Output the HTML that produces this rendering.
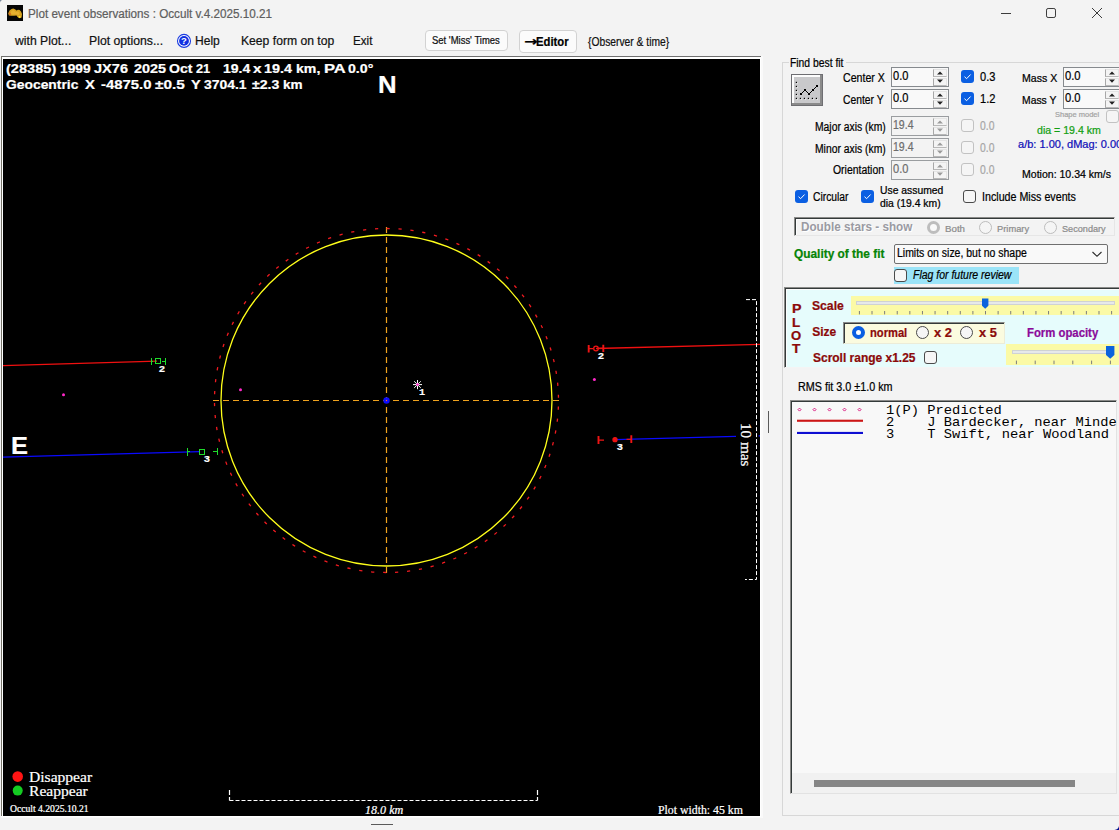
<!DOCTYPE html>
<html><head><meta charset="utf-8"><title>Plot event observations</title>
<style>
html,body{margin:0;padding:0}
body{width:1119px;height:830px;overflow:hidden;position:relative;background:#f3f3f3;font-family:"Liberation Sans",sans-serif;font-size:11px}
.a{position:absolute}
.t{position:absolute;white-space:pre;line-height:1;transform-origin:0 0;-webkit-text-stroke:0.22px}
.btn{position:absolute;background:#fbfbfb;border:1px solid #d2d2d2;border-radius:4px;box-sizing:border-box}
.num{position:absolute;box-sizing:border-box;border:1px solid #868a8e;background:#f9f9f9;width:58px;height:20px}
.num.d{background:#f3f3f3;border-color:#9a9da0}
.sp{position:absolute;box-sizing:border-box;width:14px;height:8px;border:1px solid #e4e4e4;border-left-color:#a8a8a8;border-bottom-color:#b8b8b8;background:#f4f4f4}
.cb{position:absolute;box-sizing:border-box;width:13px;height:13px;border-radius:3px}
.cb.on{background:#0b5fe2}
.cb.off{border:1px solid #4a4a4a;background:#f6f6f6}
.cb.dis{border:1px solid #c2c2c2;background:#f5f5f5}
.rd{position:absolute;box-sizing:border-box;width:13px;height:13px;border-radius:50%}
.rd.off{border:1px solid #4a4a4a;background:#f6f6f6}
.rd.dis{border:1px solid #bdbdbd;background:#f5f5f5}
</style></head><body>
<!-- title bar -->
<svg class="a" style="left:7px;top:5px" width="16" height="16" viewBox="0 0 16 16"><rect width="16" height="16" fill="#050505"/><path d="M1.2 8.5 L2.5 5.5 L4.5 4 L6.3 3.4 L8 4.2 L9.5 5.6 L11 4.8 L12.6 5 L14 6.5 L15 9 L14.6 12.5 L12.5 13.2 L10.5 12 L9.5 10.5 L7 10.8 L4 10.7 L2 10.5 Z" fill="#d6a21e"/><path d="M3 8 L5 5.5 L7 5 L8.5 7 L11 6.5 L12.5 8 L12 10 L9 9.5 L5 9.6 Z" fill="#e6b030"/><circle cx="12.6" cy="12" r="1.1" fill="#ffe23a"/><path d="M1.8 9.5 L3 7 L4 9.8 Z" fill="#d8551c"/></svg>
<svg class="a" style="left:995px;top:0" width="124" height="28" viewBox="995 0 124 28" fill="none" stroke="#3c3c3c" stroke-width="1"><path d="M1001 13.5 H1011"/><rect x="1046.5" y="8.5" width="9" height="9" rx="1.6"/><path d="M1092 8 L1102 18 M1102 8 L1092 18"/></svg>
<!-- menu -->
<svg class="a" style="left:176px;top:33px" width="16" height="16" viewBox="0 0 16 16"><circle cx="8" cy="7.9" r="6.5" fill="#fff" stroke="#1a3be0" stroke-width="1.1"/><circle cx="8" cy="7.9" r="4.9" fill="#1030e2"/><text x="8" y="11.3" font-family="Liberation Sans, sans-serif" font-weight="700" font-size="9.5" fill="#fff" text-anchor="middle">?</text></svg>
<div class="btn" style="left:425px;top:30px;width:83px;height:21px"></div>
<div class="btn" style="left:518.5px;top:30px;width:58px;height:23px"></div>
<!-- plot frame -->
<div class="a" style="left:1px;top:56px;width:762px;height:762px;background:#fafafa"></div><div class="a" style="left:1px;top:56px;width:760px;height:761px;background:#fff"></div>
<div class="a" style="left:1px;top:56px;width:760px;height:1px;background:#6f6f6f"></div>
<div class="a" style="left:1px;top:56px;width:1px;height:760px;background:#77756a"></div>
<div class="a" style="left:3px;top:59px;width:757px;height:757px;background:#000"></div>
<svg class="a" style="left:0;top:0" width="1119" height="830" viewBox="0 0 1119 830" fill="none">
<g stroke="#f0a31e" stroke-width="1.2" stroke-dasharray="6 4">
<path d="M386.5 227 V574"/><path d="M213 400.5 H559"/></g>
<circle cx="386.5" cy="400.5" r="165.5" stroke="#ffff1a" stroke-width="1.3"/>
<circle cx="386.5" cy="400.5" r="172" stroke="#f01a20" stroke-width="1.3" stroke-dasharray="3.2 8.808" transform="rotate(-90 386.5 400.5)"/>
<circle cx="386.5" cy="400.5" r="3.2" fill="#0b0bff"/><rect x="385.9" y="399.9" width="1.2" height="1.2" fill="#ff6a30"/>
<!-- chords -->
<path d="M3 365.6 L157 361.2 M596 348.5 L760 344.3" stroke="#f01010" stroke-width="1.35"/>
<path d="M3 457.2 L200 451.6 M615 439.7 L736 436.4 M758.6 435.8 L760 435.8" stroke="#0a0aff" stroke-width="1.35"/>
<!-- green markers (reappear) -->
<g stroke="#1fdc2c" stroke-width="1" shape-rendering="crispEdges">
<path d="M151 358 V365 M151 361.4 H153 M155 358.9 H160 V363.9 H155 Z M165.5 357.5 V364.5 M162 361 H165.5"/>
<path d="M187 448 V455.5 M187 451.9 H189.5 M199.5 449 H204.5 V454 H199.5 Z M217.8 447.5 V455 M213 451.1 H217.8"/>
</g>
<!-- red markers (disappear) -->
<g stroke="#ee1414" stroke-width="1.9">
<path d="M588.7 345 V352.5 M603.3 344.8 V352 M598.5 436 V444 M631.3 435.2 V443"/></g>
<g stroke="#ee1414" stroke-width="1.3">
<path d="M588.6 348.7 H593 M599 348.4 H603.3 M598.4 440.1 H604 M626.5 439.3 H631.3"/>
<circle cx="596" cy="348.5" r="2.3"/>
<circle cx="615" cy="439.7" r="2" fill="#ee1414"/>
</g>
<!-- predicted -->
<g fill="#ff28c8"><circle cx="63.5" cy="394.7" r="1.5"/><circle cx="240.5" cy="389.8" r="1.5"/><circle cx="594.4" cy="379.6" r="1.5"/></g>
<g stroke="#fff" stroke-width="1"><path d="M413 384.6 H422 M417.5 380 V389.2 M414.2 381.3 L420.8 387.9 M420.8 381.3 L414.2 387.9"/></g>
<circle cx="417.5" cy="384.6" r="1.3" fill="#ff28c8"/>
<!-- mas bracket -->
<g stroke="#fff" stroke-width="1" stroke-dasharray="4 2"><path d="M746 299.6 H756.5 V579.5 H745"/></g>
<!-- km bracket -->
<g stroke="#fff" stroke-width="1.2"><path d="M229.5 790 V800.5 M537.5 790 V800.5" stroke-dasharray="5 2"/><path d="M229.5 800.5 H537.5" stroke-dasharray="4 2"/></g>
<!-- legend -->
<circle cx="17.7" cy="776.6" r="5.3" fill="#ff1414"/><circle cx="17.7" cy="790.6" r="5" fill="#14cc22"/>
</svg>
<div class="a" style="left:738px;top:420px;width:17px;height:50px;background:#000"></div>

<div class="a" style="left:782px;top:62px;width:400px;height:754px;border:1px solid #d7d7d7;box-sizing:border-box"></div>
<div class="a" style="left:789px;top:57px;width:57px;height:12px;background:#f3f3f3"></div>
<div class="a" style="left:791px;top:74px;width:32px;height:32px;background:#6e6e72"></div>
<div class="a" style="left:792px;top:75px;width:30px;height:30px;background:#8a8a8a"></div>
<div class="a" style="left:792px;top:75px;width:28px;height:28px;background:#fdfdfd"></div>
<div class="a" style="left:794px;top:77px;width:26px;height:26px;background:#c9c9cb"></div>
<svg class="a" style="left:791px;top:74px" width="32" height="32" viewBox="791 74 32 32"><g fill="#fff"><rect x="796.2" y="82.2" width="1.5" height="1.5"/><rect x="796.2" y="86.2" width="1.5" height="1.5"/><rect x="796.2" y="90.2" width="1.5" height="1.5"/><rect x="796.2" y="94.2" width="1.5" height="1.5"/><rect x="796.2" y="98.2" width="1.5" height="1.5"/><rect x="800.2" y="98.2" width="1.5" height="1.5"/><rect x="804.2" y="98.2" width="1.5" height="1.5"/><rect x="808.2" y="98.2" width="1.5" height="1.5"/><rect x="812.2" y="98.2" width="1.5" height="1.5"/><rect x="816.2" y="98.2" width="1.5" height="1.5"/></g><g fill="#000"><rect x="795.8" y="81.8" width="1.3" height="1.3"/><rect x="795.8" y="85.8" width="1.3" height="1.3"/><rect x="795.8" y="89.8" width="1.3" height="1.3"/><rect x="795.8" y="93.8" width="1.3" height="1.3"/><rect x="795.8" y="97.8" width="1.3" height="1.3"/><rect x="799.8" y="97.8" width="1.3" height="1.3"/><rect x="803.8" y="97.8" width="1.3" height="1.3"/><rect x="807.8" y="97.8" width="1.3" height="1.3"/><rect x="811.8" y="97.8" width="1.3" height="1.3"/><rect x="815.8" y="97.8" width="1.3" height="1.3"/></g><path d="M801 94 L805 90 L809 94 L813 90 L817 86" stroke="#000" stroke-width="1" fill="none"/><g fill="#000"><rect x="800" y="93" width="2" height="2"/><rect x="804" y="89" width="2" height="2"/><rect x="808" y="93" width="2" height="2"/><rect x="812" y="89" width="2" height="2"/><rect x="816" y="85" width="2" height="2"/></g></svg>
<div class="num" style="left:891px;top:67px"><div class="sp" style="left:41px;top:1px"></div><div class="sp" style="left:41px;top:9.5px"></div><svg class="a" style="left:41px;top:1px" width="14" height="17" viewBox="0 0 14 17"><path d="M4 5.6 L7 2.4 L10 5.6 Z M4 10.6 L7 13.8 L10 10.6 Z" fill="#222"/></svg></div>
<div class="num" style="left:891px;top:89px"><div class="sp" style="left:41px;top:1px"></div><div class="sp" style="left:41px;top:9.5px"></div><svg class="a" style="left:41px;top:1px" width="14" height="17" viewBox="0 0 14 17"><path d="M4 5.6 L7 2.4 L10 5.6 Z M4 10.6 L7 13.8 L10 10.6 Z" fill="#222"/></svg></div>
<div class="num d" style="left:891px;top:116px"><div class="sp" style="left:41px;top:1px"></div><div class="sp" style="left:41px;top:9.5px"></div><svg class="a" style="left:41px;top:1px" width="14" height="17" viewBox="0 0 14 17"><path d="M4 5.6 L7 2.4 L10 5.6 Z M4 10.6 L7 13.8 L10 10.6 Z" fill="#9a9a9a"/></svg></div>
<div class="num d" style="left:891px;top:138px"><div class="sp" style="left:41px;top:1px"></div><div class="sp" style="left:41px;top:9.5px"></div><svg class="a" style="left:41px;top:1px" width="14" height="17" viewBox="0 0 14 17"><path d="M4 5.6 L7 2.4 L10 5.6 Z M4 10.6 L7 13.8 L10 10.6 Z" fill="#9a9a9a"/></svg></div>
<div class="num d" style="left:891px;top:160px"><div class="sp" style="left:41px;top:1px"></div><div class="sp" style="left:41px;top:9.5px"></div><svg class="a" style="left:41px;top:1px" width="14" height="17" viewBox="0 0 14 17"><path d="M4 5.6 L7 2.4 L10 5.6 Z M4 10.6 L7 13.8 L10 10.6 Z" fill="#9a9a9a"/></svg></div>
<div class="num" style="left:1063px;top:67px"><div class="sp" style="left:41px;top:1px"></div><div class="sp" style="left:41px;top:9.5px"></div><svg class="a" style="left:41px;top:1px" width="14" height="17" viewBox="0 0 14 17"><path d="M4 5.6 L7 2.4 L10 5.6 Z M4 10.6 L7 13.8 L10 10.6 Z" fill="#222"/></svg></div>
<div class="num" style="left:1063px;top:89px"><div class="sp" style="left:41px;top:1px"></div><div class="sp" style="left:41px;top:9.5px"></div><svg class="a" style="left:41px;top:1px" width="14" height="17" viewBox="0 0 14 17"><path d="M4 5.6 L7 2.4 L10 5.6 Z M4 10.6 L7 13.8 L10 10.6 Z" fill="#222"/></svg></div>
<div class="cb on" style="left:961px;top:70px"><svg class="a" style="left:0;top:0" width="13" height="13" viewBox="0 0 13 13"><path d="M3.5 6.7 L5.6 8.7 L9.6 4.5" stroke="#fff" stroke-width="1" fill="none"/></svg></div>
<div class="cb on" style="left:961px;top:92px"><svg class="a" style="left:0;top:0" width="13" height="13" viewBox="0 0 13 13"><path d="M3.5 6.7 L5.6 8.7 L9.6 4.5" stroke="#fff" stroke-width="1" fill="none"/></svg></div>
<div class="cb dis" style="left:961px;top:119px"></div>
<div class="cb dis" style="left:961px;top:141px"></div>
<div class="cb dis" style="left:961px;top:163px"></div>
<div class="cb dis" style="left:1106px;top:109.5px"></div>
<div class="cb on" style="left:795px;top:190px"><svg class="a" style="left:0;top:0" width="13" height="13" viewBox="0 0 13 13"><path d="M3.5 6.7 L5.6 8.7 L9.6 4.5" stroke="#fff" stroke-width="1" fill="none"/></svg></div>
<div class="cb on" style="left:861px;top:190px"><svg class="a" style="left:0;top:0" width="13" height="13" viewBox="0 0 13 13"><path d="M3.5 6.7 L5.6 8.7 L9.6 4.5" stroke="#fff" stroke-width="1" fill="none"/></svg></div>
<div class="cb off" style="left:963px;top:190px"></div>
<div class="a" style="left:794px;top:217px;width:321px;height:19px;box-sizing:border-box;border-top:1px solid #8a8a88;border-left:1px solid #8a8a88;border-right:1px solid #e6e6e6;border-bottom:1px solid #e6e6e6;box-shadow:inset 1px 1px 0 #343a3a,inset 2px 2px 0 #fcfcfc"></div>
<div class="rd" style="left:927px;top:221px;border:3.5px solid #bdbdbd;background:#fafafa"></div>
<div class="rd dis" style="left:979px;top:221px"></div><div class="rd dis" style="left:1044px;top:221px"></div>
<div class="a" style="left:894px;top:244px;width:214px;height:20px;box-sizing:border-box;border:1px solid #6f6f6f;border-radius:2px;background:#f9f9f9"></div>
<svg class="a" style="left:1090px;top:249px" width="14" height="10" viewBox="0 0 14 10"><path d="M2.5 3 L7 7.3 L11.5 3" stroke="#2a2a2a" stroke-width="1.1" fill="none"/></svg>
<div class="a" style="left:894px;top:267px;width:125px;height:17px;background:#9be4f8"></div>
<div class="cb off" style="left:894px;top:268.5px"></div>
<div class="a" style="left:784px;top:287px;width:340px;height:81px;box-sizing:border-box;background:#e6fcfc;border-top:1px solid #8a8a88;border-left:1px solid #8a8a88;border-bottom:1px solid #f4f4f4;box-shadow:inset 1px 1px 0 #343a3a,inset 2px 2px 0 #fcfcfc"></div>
<div class="a" style="left:851px;top:296px;width:268px;height:19px;background:#fbfaa6"></div>
<div class="a" style="left:856px;top:301px;width:259px;height:4px;box-sizing:border-box;background:#e6e9ea;border:1px solid #cfd2d4"></div>
<svg class="a" style="left:851px;top:296px" width="268" height="19" viewBox="851 296 268 19"><g fill="#7d7d7d"><rect x="858.90" y="311" width="1" height="3.4"/><rect x="871.51" y="311" width="1" height="3.4"/><rect x="884.12" y="311" width="1" height="3.4"/><rect x="896.73" y="311" width="1" height="3.4"/><rect x="909.34" y="311" width="1" height="3.4"/><rect x="921.95" y="311" width="1" height="3.4"/><rect x="934.56" y="311" width="1" height="3.4"/><rect x="947.17" y="311" width="1" height="3.4"/><rect x="959.78" y="311" width="1" height="3.4"/><rect x="972.39" y="311" width="1" height="3.4"/><rect x="985.00" y="311" width="1" height="3.4"/><rect x="997.61" y="311" width="1" height="3.4"/><rect x="1010.22" y="311" width="1" height="3.4"/><rect x="1022.83" y="311" width="1" height="3.4"/><rect x="1035.44" y="311" width="1" height="3.4"/><rect x="1048.05" y="311" width="1" height="3.4"/><rect x="1060.66" y="311" width="1" height="3.4"/><rect x="1073.27" y="311" width="1" height="3.4"/><rect x="1085.88" y="311" width="1" height="3.4"/><rect x="1098.49" y="311" width="1" height="3.4"/><rect x="1111.10" y="311" width="1" height="3.4"/></g><path d="M982 298.6 H988.4 V305.8 L985.2 308.8 L982 305.8 Z" fill="#0b63dd"/></svg>
<div class="a" style="left:843px;top:322px;width:162px;height:21.5px;box-sizing:border-box;background:#fbfbdf;border-top:1px solid #8a8a88;border-left:1px solid #8a8a88;border-right:1px solid #ececd8;border-bottom:1px solid #ececd8;box-shadow:inset 1px 1px 0 #343a3a"></div>
<div class="rd" style="left:852px;top:326px;border:4px solid #0b5fe2;background:#fff"></div>
<div class="rd off" style="left:916px;top:326px"></div><div class="rd off" style="left:960px;top:326px"></div>
<div class="cb off" style="left:924.3px;top:351px"></div>
<div class="a" style="left:1006px;top:344.3px;width:113px;height:20.4px;background:#fbfaa6"></div>
<div class="a" style="left:1012.4px;top:350px;width:102px;height:4px;box-sizing:border-box;background:#e6e9ea;border:1px solid #cfd2d4"></div>
<svg class="a" style="left:1006px;top:344px" width="113" height="22" viewBox="1006 344 113 22"><g fill="#7d7d7d"><rect x="1015.90" y="360.6" width="1" height="3.6"/><rect x="1034.70" y="360.6" width="1" height="3.6"/><rect x="1053.50" y="360.6" width="1" height="3.6"/><rect x="1072.30" y="360.6" width="1" height="3.6"/><rect x="1091.10" y="360.6" width="1" height="3.6"/><rect x="1109.90" y="360.6" width="1" height="3.6"/></g><path d="M1106 346 H1114.4 V355 L1110.2 358.8 L1106 355 Z" fill="#0b63dd"/></svg>
<div class="a" style="left:790px;top:400px;width:326.6px;height:394.4px;box-sizing:border-box;background:#f8f8f8;border-top:1px solid #8a8a88;border-left:1px solid #8a8a88;border-right:1px solid #e2e2e2;border-bottom:1px solid #e2e2e2;box-shadow:inset 1px 1px 0 #343a3a"></div>
<div class="a" style="left:792px;top:773px;width:323.6px;height:20.4px;background:#f1f1f1"></div>
<div class="a" style="left:814px;top:780px;width:261px;height:7px;background:#868686"></div>
<svg class="a" style="left:792px;top:402px" width="100" height="40" viewBox="792 402 100 40"><g fill="none" stroke="#d81a80" stroke-width="1"><path d="M799.5 408.1 l1.5 1.5 l-1.5 1.5 l-1.5 -1.5 Z"/><path d="M814.5 408.1 l1.5 1.5 l-1.5 1.5 l-1.5 -1.5 Z"/><path d="M829.5 408.1 l1.5 1.5 l-1.5 1.5 l-1.5 -1.5 Z"/><path d="M844.5 408.1 l1.5 1.5 l-1.5 1.5 l-1.5 -1.5 Z"/><path d="M859.5 408.1 l1.5 1.5 l-1.5 1.5 l-1.5 -1.5 Z"/></g><rect x="797" y="419.7" width="66" height="2.1" fill="#cc1616"/><rect x="797" y="431.9" width="66" height="2.1" fill="#0e0ed2"/></svg>
<div class="t" style="left:27.93px;top:8.00px;transform:scale(0.9735,1.0);font-family:'Liberation Sans', sans-serif;font-size:12px;font-weight:400;color:#5e5e5e;">Plot event observations : Occult v.4.2025.10.21</div>
<div class="t" style="left:14.50px;top:35.00px;transform:scale(0.9617,1.0);font-family:'Liberation Sans', sans-serif;font-size:12.7px;font-weight:400;color:#111;">with Plot...</div>
<div class="t" style="left:88.54px;top:35.00px;transform:scale(0.9645,1.0);font-family:'Liberation Sans', sans-serif;font-size:12.7px;font-weight:400;color:#111;">Plot options...</div>
<div class="t" style="left:195.05px;top:35.00px;transform:scale(0.9510,1.0);font-family:'Liberation Sans', sans-serif;font-size:12.7px;font-weight:400;color:#111;">Help</div>
<div class="t" style="left:240.54px;top:35.00px;transform:scale(0.9577,1.0);font-family:'Liberation Sans', sans-serif;font-size:12.7px;font-weight:400;color:#111;">Keep form on top</div>
<div class="t" style="left:352.58px;top:35.00px;transform:scale(0.9150,1.0);font-family:'Liberation Sans', sans-serif;font-size:12.7px;font-weight:400;color:#111;">Exit</div>
<div class="t" style="left:431.83px;top:36.00px;transform:scale(0.9470,1.0);font-family:'Liberation Sans', sans-serif;font-size:10px;font-weight:400;color:#111;">Set 'Miss' Times</div>
<div class="t" style="left:523.68px;top:35.00px;transform:scale(1.2211,1.0);font-family:'DejaVu Sans', sans-serif;font-size:13px;font-weight:700;color:#000;">→</div>
<div class="t" style="left:536.30px;top:36.00px;transform:scale(0.9393,1.0);font-family:'Liberation Sans', sans-serif;font-size:12px;font-weight:700;color:#000;">Editor</div>
<div class="t" style="left:587.59px;top:36.00px;transform:scale(0.8224,1.0);font-family:'Liberation Sans', sans-serif;font-size:12.5px;font-weight:400;color:#111;">{Observer &amp; time}</div>
<div class="t" style="left:6.10px;top:62.00px;transform:scale(1.0725,1.0);font-family:'Liberation Sans', sans-serif;font-size:13.6px;font-weight:700;color:#fff;">(28385)</div>
<div class="t" style="left:60.14px;top:62.00px;transform:scale(1.0103,1.0);font-family:'Liberation Sans', sans-serif;font-size:13.6px;font-weight:700;color:#fff;">1999</div>
<div class="t" style="left:94.23px;top:62.00px;transform:scale(1.0710,1.0);font-family:'Liberation Sans', sans-serif;font-size:13.6px;font-weight:700;color:#fff;">JX76</div>
<div class="t" style="left:133.87px;top:62.00px;transform:scale(1.0598,1.0);font-family:'Liberation Sans', sans-serif;font-size:13.6px;font-weight:700;color:#fff;">2025</div>
<div class="t" style="left:169.08px;top:62.00px;transform:scale(1.0364,1.0);font-family:'Liberation Sans', sans-serif;font-size:13.6px;font-weight:700;color:#fff;">Oct</div>
<div class="t" style="left:196.43px;top:62.00px;transform:scale(0.9404,1.0);font-family:'Liberation Sans', sans-serif;font-size:13.6px;font-weight:700;color:#fff;">21</div>
<div class="t" style="left:222.83px;top:62.00px;transform:scale(1.0314,1.0);font-family:'Liberation Sans', sans-serif;font-size:13.6px;font-weight:700;color:#fff;">19.4</div>
<div class="t" style="left:252.72px;top:62.00px;transform:scale(1.1310,1.0);font-family:'Liberation Sans', sans-serif;font-size:13.6px;font-weight:700;color:#fff;">x</div>
<div class="t" style="left:264.41px;top:62.00px;transform:scale(1.0588,1.0);font-family:'Liberation Sans', sans-serif;font-size:13.6px;font-weight:700;color:#fff;">19.4</div>
<div class="t" style="left:296.06px;top:62.00px;transform:scale(1.0372,1.0);font-family:'Liberation Sans', sans-serif;font-size:13.6px;font-weight:700;color:#fff;">km,</div>
<div class="t" style="left:324.38px;top:62.00px;transform:scale(1.2182,1.0);font-family:'Liberation Sans', sans-serif;font-size:13.6px;font-weight:700;color:#fff;">PA</div>
<div class="t" style="left:348.18px;top:62.00px;transform:scale(1.0409,1.0);font-family:'Liberation Sans', sans-serif;font-size:13.6px;font-weight:700;color:#fff;">0.0°</div>
<div class="t" style="left:6.39px;top:78.00px;transform:scale(1.0186,1.0);font-family:'Liberation Sans', sans-serif;font-size:13.6px;font-weight:700;color:#fff;">Geocentric</div>
<div class="t" style="left:84.73px;top:78.00px;transform:scale(1.0971,1.0);font-family:'Liberation Sans', sans-serif;font-size:13.6px;font-weight:700;color:#fff;">X</div>
<div class="t" style="left:101.15px;top:78.00px;transform:scale(1.0933,1.0);font-family:'Liberation Sans', sans-serif;font-size:13.6px;font-weight:700;color:#fff;">-4875.0</div>
<div class="t" style="left:154.52px;top:78.00px;transform:scale(1.1301,1.0);font-family:'Liberation Sans', sans-serif;font-size:13.6px;font-weight:700;color:#fff;">±0.5</div>
<div class="t" style="left:190.83px;top:78.00px;transform:scale(1.0706,1.0);font-family:'Liberation Sans', sans-serif;font-size:13.6px;font-weight:700;color:#fff;">Y</div>
<div class="t" style="left:203.94px;top:78.00px;transform:scale(1.0244,1.0);font-family:'Liberation Sans', sans-serif;font-size:13.6px;font-weight:700;color:#fff;">3704.1</div>
<div class="t" style="left:251.94px;top:78.00px;transform:scale(1.0369,1.0);font-family:'Liberation Sans', sans-serif;font-size:13.6px;font-weight:700;color:#fff;">±2.3</div>
<div class="t" style="left:282.90px;top:78.00px;transform:scale(0.9972,1.0);font-family:'Liberation Sans', sans-serif;font-size:13.6px;font-weight:700;color:#fff;">km</div>
<div class="t" style="left:377.99px;top:73.00px;transform:scale(1.0737,1.0);font-family:'Liberation Sans', sans-serif;font-size:24px;font-weight:700;color:#fff;">N</div>
<div class="t" style="left:11.21px;top:434.00px;transform:scale(1.0593,1.0);font-family:'Liberation Sans', sans-serif;font-size:24px;font-weight:700;color:#fff;">E</div>
<div class="t" style="left:159.32px;top:364.00px;transform:scale(1.1158,1.0);font-family:'Liberation Sans', sans-serif;font-size:9.5px;font-weight:700;color:#fff;">2</div>
<div class="t" style="left:204.42px;top:454.00px;transform:scale(1.1158,1.0);font-family:'Liberation Sans', sans-serif;font-size:9.5px;font-weight:700;color:#fff;">3</div>
<div class="t" style="left:597.82px;top:351.00px;transform:scale(1.1158,1.0);font-family:'Liberation Sans', sans-serif;font-size:9.5px;font-weight:700;color:#fff;">2</div>
<div class="t" style="left:616.83px;top:442.00px;transform:scale(1.0947,1.0);font-family:'Liberation Sans', sans-serif;font-size:9.5px;font-weight:700;color:#fff;">3</div>
<div class="t" style="left:419.20px;top:388.00px;transform:scale(1.0667,1.0);font-family:'Liberation Mono', monospace;font-size:9.5px;font-weight:700;color:#fff;">1</div>
<div class="t" style="left:28.70px;top:769.00px;transform:scale(1.0065,1.0);font-family:'Liberation Serif', serif;font-size:15.47px;font-weight:400;color:#fff;">Disappear</div>
<div class="t" style="left:28.70px;top:783.00px;transform:scale(1.0061,1.0);font-family:'Liberation Serif', serif;font-size:15.47px;font-weight:400;color:#fff;">Reappear</div>
<div class="t" style="left:9.79px;top:805.00px;transform:scale(1.0131,1.0);font-family:'Liberation Serif', serif;font-size:9.5px;font-weight:400;color:#fff;">Occult 4.2025.10.21</div>
<div class="t" style="left:365.30px;top:804.00px;transform:scale(1.0081,1.0);font-family:'Liberation Serif', serif;font-size:12px;font-weight:400;font-style:italic;color:#fff;">18.0 km</div>
<div class="t" style="left:657.95px;top:804.00px;transform:scale(0.9826,1.0);font-family:'Liberation Serif', serif;font-size:12px;font-weight:400;color:#fff;">Plot width: 45 km</div>
<div class="t" style="left:790.34px;top:57.00px;transform:scale(0.8623,1.0);font-family:'Liberation Sans', sans-serif;font-size:12px;font-weight:400;color:#000;">Find best fit</div>
<div class="t" style="left:843.16px;top:72.00px;transform:scale(0.8860,1.0);font-family:'Liberation Sans', sans-serif;font-size:12px;font-weight:400;color:#000;">Center X</div>
<div class="t" style="left:843.17px;top:94.00px;transform:scale(0.8605,1.0);font-family:'Liberation Sans', sans-serif;font-size:12px;font-weight:400;color:#000;">Center Y</div>
<div class="t" style="left:814.74px;top:121.00px;transform:scale(0.8623,1.0);font-family:'Liberation Sans', sans-serif;font-size:12px;font-weight:400;color:#000;">Major axis (km)</div>
<div class="t" style="left:814.74px;top:143.00px;transform:scale(0.8623,1.0);font-family:'Liberation Sans', sans-serif;font-size:12px;font-weight:400;color:#000;">Minor axis (km)</div>
<div class="t" style="left:833.47px;top:164.00px;transform:scale(0.8696,1.0);font-family:'Liberation Sans', sans-serif;font-size:12px;font-weight:400;color:#000;">Orientation</div>
<div class="t" style="left:893.04px;top:70.00px;transform:scale(0.9206,1.0);font-family:'Liberation Sans', sans-serif;font-size:12px;font-weight:400;color:#000;">0.0</div>
<div class="t" style="left:893.04px;top:92.00px;transform:scale(0.9206,1.0);font-family:'Liberation Sans', sans-serif;font-size:12px;font-weight:400;color:#000;">0.0</div>
<div class="t" style="left:893.42px;top:119.00px;transform:scale(0.8773,1.0);font-family:'Liberation Sans', sans-serif;font-size:12px;font-weight:400;color:#6d6d6d;">19.4</div>
<div class="t" style="left:893.42px;top:141.00px;transform:scale(0.8773,1.0);font-family:'Liberation Sans', sans-serif;font-size:12px;font-weight:400;color:#6d6d6d;">19.4</div>
<div class="t" style="left:893.04px;top:163.00px;transform:scale(0.9206,1.0);font-family:'Liberation Sans', sans-serif;font-size:12px;font-weight:400;color:#6d6d6d;">0.0</div>
<div class="t" style="left:979.94px;top:71.00px;transform:scale(0.9206,1.0);font-family:'Liberation Sans', sans-serif;font-size:12px;font-weight:400;color:#000;">0.3</div>
<div class="t" style="left:980.07px;top:93.00px;transform:scale(0.9267,1.0);font-family:'Liberation Sans', sans-serif;font-size:12px;font-weight:400;color:#000;">1.2</div>
<div class="t" style="left:980.37px;top:120.00px;transform:scale(0.8635,1.0);font-family:'Liberation Sans', sans-serif;font-size:12px;font-weight:400;color:#a6a6a6;">0.0</div>
<div class="t" style="left:980.37px;top:142.00px;transform:scale(0.8635,1.0);font-family:'Liberation Sans', sans-serif;font-size:12px;font-weight:400;color:#a6a6a6;">0.0</div>
<div class="t" style="left:980.37px;top:164.00px;transform:scale(0.8635,1.0);font-family:'Liberation Sans', sans-serif;font-size:12px;font-weight:400;color:#a6a6a6;">0.0</div>
<div class="t" style="left:1022.03px;top:74.00px;transform:scale(1.0256,1.0);font-family:'Liberation Sans', sans-serif;font-size:10.3px;font-weight:400;color:#000;">Mass X</div>
<div class="t" style="left:1022.05px;top:96.00px;transform:scale(1.0061,1.0);font-family:'Liberation Sans', sans-serif;font-size:10.3px;font-weight:400;color:#000;">Mass Y</div>
<div class="t" style="left:1064.53px;top:70.00px;transform:scale(0.9333,1.0);font-family:'Liberation Sans', sans-serif;font-size:12px;font-weight:400;color:#000;">0.0</div>
<div class="t" style="left:1064.53px;top:92.00px;transform:scale(0.9333,1.0);font-family:'Liberation Sans', sans-serif;font-size:12px;font-weight:400;color:#000;">0.0</div>
<div class="t" style="left:1054.71px;top:111.00px;transform:scale(0.9874,1.0);font-family:'Liberation Sans', sans-serif;font-size:7.6px;font-weight:400;color:#a4a4a4;">Shape model</div>
<div class="t" style="left:1036.69px;top:126.00px;transform:scale(1.0279,1.0);font-family:'Liberation Sans', sans-serif;font-size:10.3px;font-weight:400;color:#12a012;">dia = 19.4 km</div>
<div class="t" style="left:1017.76px;top:140.00px;transform:scale(1.0705,1.0);font-family:'Liberation Sans', sans-serif;font-size:10.3px;font-weight:400;color:#1010b8;">a/b: 1.00, dMag: 0.00</div>
<div class="t" style="left:1022.03px;top:170.00px;transform:scale(1.0239,1.0);font-family:'Liberation Sans', sans-serif;font-size:10.3px;font-weight:400;color:#000;">Motion: 10.34 km/s</div>
<div class="t" style="left:813.47px;top:191.00px;transform:scale(0.8589,1.0);font-family:'Liberation Sans', sans-serif;font-size:12px;font-weight:400;color:#000;">Circular</div>
<div class="t" style="left:879.74px;top:186.00px;transform:scale(1.0164,1.0);font-family:'Liberation Sans', sans-serif;font-size:10.2px;font-weight:400;color:#000;">Use assumed</div>
<div class="t" style="left:879.99px;top:199.00px;transform:scale(1.0197,1.0);font-family:'Liberation Sans', sans-serif;font-size:10.2px;font-weight:400;color:#000;">dia (19.4 km)</div>
<div class="t" style="left:981.61px;top:191.00px;transform:scale(0.8913,1.0);font-family:'Liberation Sans', sans-serif;font-size:12px;font-weight:400;color:#000;">Include Miss events</div>
<div class="t" style="left:801.07px;top:221.00px;transform:scale(0.9766,1.0);font-family:'Liberation Sans', sans-serif;font-size:12px;font-weight:700;color:#9a9aa2;text-shadow:1px 1px 0 #fff;-webkit-text-stroke:0;">Double stars - show</div>
<div class="t" style="left:944.72px;top:225.00px;transform:scale(1.0423,1.0);font-family:'Liberation Sans', sans-serif;font-size:9.33px;font-weight:400;color:#8c8c8c;">Both</div>
<div class="t" style="left:996.65px;top:225.00px;transform:scale(0.9984,1.0);font-family:'Liberation Sans', sans-serif;font-size:9.33px;font-weight:400;color:#8c8c8c;">Primary</div>
<div class="t" style="left:1061.91px;top:225.00px;transform:scale(0.9795,1.0);font-family:'Liberation Sans', sans-serif;font-size:9.33px;font-weight:400;color:#8c8c8c;">Secondary</div>
<div class="t" style="left:793.50px;top:248.00px;transform:scale(0.9906,1.0);font-family:'Liberation Sans', sans-serif;font-size:12px;font-weight:700;color:#058405;">Quality of the fit</div>
<div class="t" style="left:896.73px;top:247.00px;transform:scale(0.8727,1.0);font-family:'Liberation Sans', sans-serif;font-size:12px;font-weight:400;color:#000;">Limits on size, but no shape</div>
<div class="t" style="left:913.46px;top:269.00px;transform:scale(0.8727,1.0);font-family:'Liberation Sans', sans-serif;font-size:12px;font-weight:400;font-style:italic;color:#000;">Flag for future review</div>
<div class="t" style="left:791.51px;top:303.00px;transform:scale(1.1852,1.0);font-family:'Liberation Sans', sans-serif;font-size:12px;font-weight:700;color:#8b0a0a;">P</div>
<div class="t" style="left:791.56px;top:317.00px;transform:scale(1.1200,1.0);font-family:'Liberation Sans', sans-serif;font-size:12px;font-weight:700;color:#8b0a0a;">L</div>
<div class="t" style="left:791.45px;top:330.00px;transform:scale(1.0909,1.0);font-family:'Liberation Sans', sans-serif;font-size:12px;font-weight:700;color:#8b0a0a;">O</div>
<div class="t" style="left:791.91px;top:343.00px;transform:scale(1.1429,1.0);font-family:'Liberation Sans', sans-serif;font-size:12px;font-weight:700;color:#8b0a0a;">T</div>
<div class="t" style="left:812.19px;top:300.00px;transform:scale(1.0131,1.0);font-family:'Liberation Sans', sans-serif;font-size:12px;font-weight:700;color:#8b0a0a;">Scale</div>
<div class="t" style="left:812.20px;top:326.00px;font-family:'Liberation Sans', sans-serif;font-size:12px;font-weight:700;color:#8b0a0a;">Size</div>
<div class="t" style="left:870.20px;top:327.00px;transform:scale(0.9299,1.0);font-family:'Liberation Sans', sans-serif;font-size:12px;font-weight:700;color:#8b0a0a;">normal</div>
<div class="t" style="left:934.43px;top:327.00px;transform:scale(1.0750,1.0);font-family:'Liberation Sans', sans-serif;font-size:12px;font-weight:700;color:#8b0a0a;">x 2</div>
<div class="t" style="left:978.93px;top:327.00px;transform:scale(1.0687,1.0);font-family:'Liberation Sans', sans-serif;font-size:12px;font-weight:700;color:#8b0a0a;">x 5</div>
<div class="t" style="left:1027.29px;top:327.00px;transform:scale(0.9450,1.0);font-family:'Liberation Sans', sans-serif;font-size:12px;font-weight:700;color:#8a0a9a;">Form opacity</div>
<div class="t" style="left:813.40px;top:352.00px;transform:scale(0.9980,1.0);font-family:'Liberation Sans', sans-serif;font-size:12px;font-weight:700;color:#8b0a0a;">Scroll range x1.25</div>
<div class="t" style="left:797.50px;top:381.00px;transform:scale(0.8976,1.0);font-family:'Liberation Sans', sans-serif;font-size:12px;font-weight:400;color:#000;">RMS fit 3.0 ±1.0 km</div>
<div class="t" style="left:885.57px;top:404.00px;transform:scale(1.0333,1.0);font-family:'Liberation Mono', monospace;font-size:13.33px;font-weight:400;color:#000;-webkit-text-stroke:0;">1(P) Predicted</div>
<div class="t" style="left:885.57px;top:416.00px;transform:scale(1.0306,1.0);font-family:'Liberation Mono', monospace;font-size:13.33px;font-weight:400;color:#000;-webkit-text-stroke:0;">2    J Bardecker, near Minde</div>
<div class="t" style="left:885.83px;top:428.00px;transform:scale(1.0327,1.0);font-family:'Liberation Mono', monospace;font-size:13.33px;font-weight:400;color:#000;-webkit-text-stroke:0;">3    T Swift, near Woodland</div>
<div class="t" style="left:753.00px;top:422.51px;transform:rotate(90deg) scale(1.0335,1.0);font-family:'Liberation Serif', serif;font-size:14.67px;font-weight:400;color:#fff;">10 mas</div>
<svg class="a" style="left:0;top:0" width="1119" height="830" viewBox="0 0 1119 830"><path d="M1119 826 V830 H1114.5 Q1118.4 829.4 1119 826 Z" fill="#061090"/><path d="M0 0 H2.2 Q0.4 0.4 0 2.6 Z" fill="#6f7f96"/></svg>
<!-- resize handles -->
<div class="a" style="left:768px;top:411px;width:1px;height:22px;background:#5a5a5a"></div>
<div class="a" style="left:371px;top:824px;width:22px;height:1px;background:#5a5a5a"></div>
</body></html>
